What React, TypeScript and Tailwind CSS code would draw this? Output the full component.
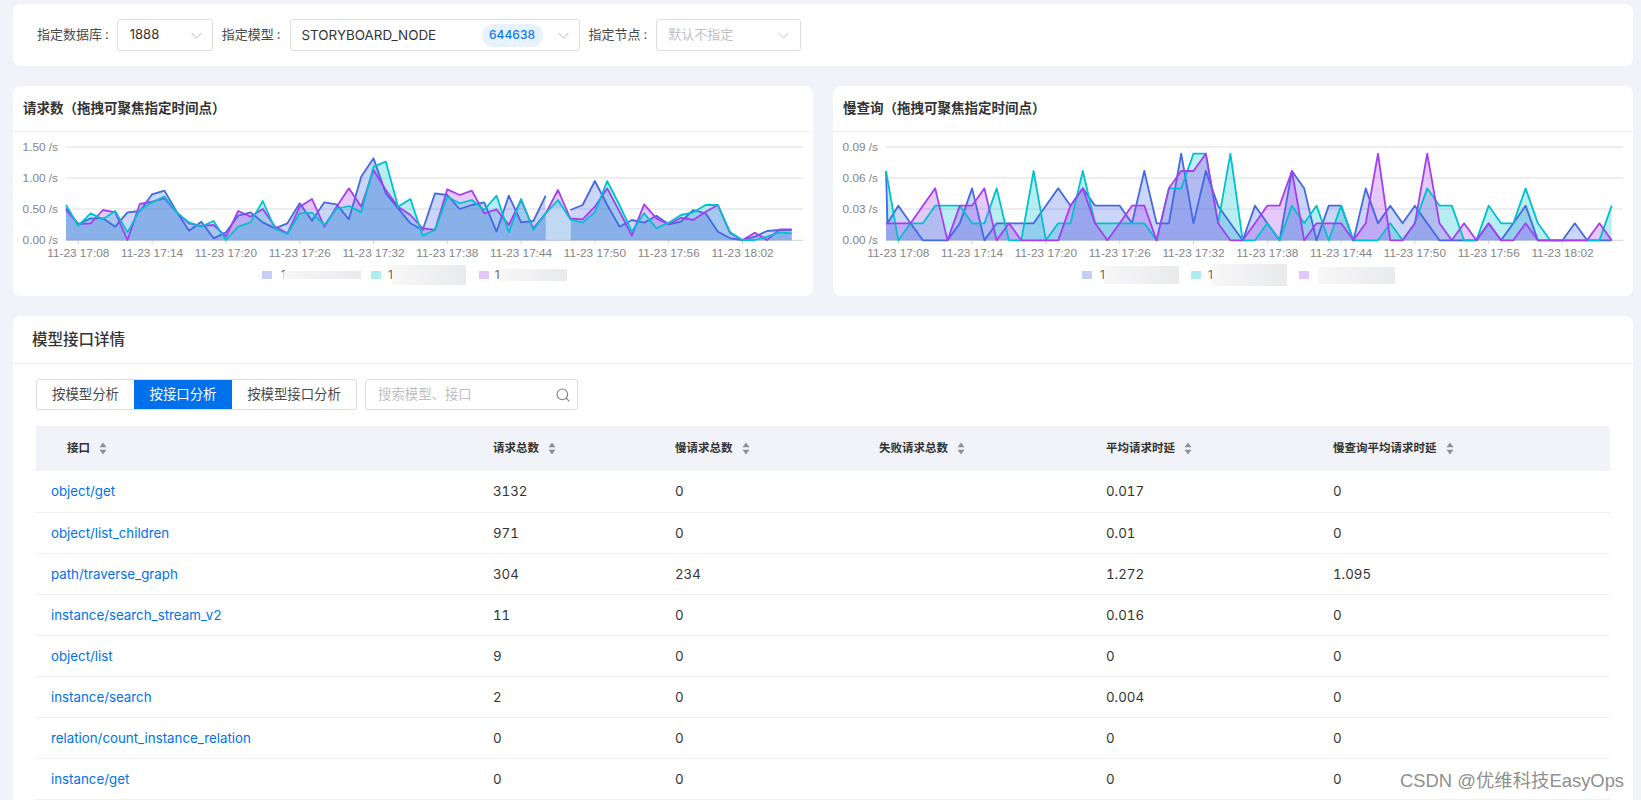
import { Search } from "lucide-react";

const font = { fontFamily: '"Inter", "Noto Sans CJK SC", sans-serif' };

// les valeurs sont lues sur la capture, en px de zoom (y = d / 3 - 7)
const reqBlue = [250, 297, 280, 280, 305, 262, 258, 208, 197, 260, 317, 290, 340, 322, 272, 262, 292, 310, 295, 235, 287, 232, 238, 283, 155, 100, 205, 250, 295, 315, 205, 210, 252, 240, 232, 320, 212, 292, 288, 212, null, 255, 240, 168, 240, 305, 285, 293, 272, 298, 290, 255, 265, 320, 340, 345, 335, 318, 315, 315];
const reqPurple = [255, 297, 295, 255, 262, 345, 237, 230, 220, 262, 295, 303, 300, 335, 258, 275, 252, 305, 325, 245, 222, 305, 245, 190, 245, 135, 195, 245, 270, 310, 315, 193, 210, 197, 265, 253, 300, 225, 310, 265, 195, 280, 283, 245, 190, 260, 332, 238, 280, 298, 278, 285, 260, 240, 325, 345, 323, 345, 313, 313];
const reqTeal = [240, 302, 265, 283, 258, 322, 255, 232, 215, 262, 292, 305, 288, 345, 305, 292, 228, 312, 327, 265, 263, 300, 252, 243, 262, 125, 110, 245, 222, 332, 315, 215, 235, 225, 255, 212, 322, 222, 315, 265, 225, 283, 293, 262, 168, 240, 320, 265, 310, 293, 270, 262, 240, 240, 322, 345, 345, 335, 322, 325];

const slowBlue = [295, 242, 295, 346, 346, 346, 295, 190, 346, 295, 295, 295, 295, 242, 190, 242, 190, 242, 242, 242, 295, 138, 295, 295, 86, 295, 138, 242, 295, 346, 242, 295, 346, 138, 190, 346, 242, 242, 346, 190, 295, 242, 295, 242, 295, 346, 346, 346, 346, 295, 346, 295, 242, 346, 346, 346, 295, 346, 346, 346];
const slowTeal = [138, 346, 295, 295, 242, 242, 242, 295, 295, 190, 346, 346, 138, 346, 295, 295, 138, 295, 295, 295, 295, 295, 346, 190, 190, 86, 86, 295, 86, 346, 346, 295, 346, 242, 295, 242, 346, 242, 346, 346, 346, 295, 346, 295, 190, 242, 242, 346, 346, 242, 295, 295, 190, 295, 346, 346, 346, 346, 346, 242];
const slowPurple = [295, 295, 295, 242, 190, 346, 242, 242, 190, 346, 295, 346, 346, 346, 346, 242, 190, 295, 346, 295, 242, 242, 346, 190, 138, 138, 86, 295, 346, 346, 295, 242, 242, 138, 346, 295, 295, 295, 346, 295, 86, 346, 346, 295, 86, 295, 346, 295, 346, 295, 346, 346, 295, 346, 346, 346, 346, 346, 295, 346];

const BLUE = "#4469e6";
const TEAL = "#00c2cd";
const PURPLE = "#a63df2";

const ticks = ["17:08", "17:14", "17:20", "17:26", "17:32", "17:38", "17:44", "17:50", "17:56", "18:02"];

type Serie = { color: string; values: (number | null)[]; head?: number };

const px = (i: number) => 53 + i * 12.3;
const py = (d: number) => d / 3 - 7;
const BASE = 108.3;

// decoupe la serie quand il manque une valeur
function segments(s: Serie) {
  const out: [number, number][][] = [];
  let cur: [number, number][] = [];
  if (s.head) cur.push([px(0), py(s.head)]);
  s.values.forEach((v, i) => {
    if (v === null) {
      if (cur.length) out.push(cur);
      cur = [];
    } else {
      cur.push([s.head && i === 0 ? px(0) + 1.5 : px(i), py(v)]);
    }
  });
  if (cur.length) out.push(cur);
  return out;
}

function Chart({ labels, series, gap }: { labels: string[]; series: Serie[]; gap?: boolean }) {
  return (
    <svg width={800} height={130} className="block">
      {[15, 46, 77].map((y) => (
        <line key={y} x1={53} x2={790} y1={y} y2={y} stroke="#e9e9ec" strokeWidth={1.3} />
      ))}
      <line x1={53} x2={790} y1={BASE} y2={BASE} stroke="#cfd2d8" />
      {labels.map((l, i) => (
        <text key={l} x={45} y={[15, 46, 77, 108][i] + 4} textAnchor="end" fontSize={11.8} fill="#858585" fontFamily="Liberation Sans, sans-serif">
          {l}
        </text>
      ))}
      {ticks.map((t, i) => (
        <g key={t}>
          <line x1={65.3 + i * 73.8} x2={65.3 + i * 73.8} y1={BASE} y2={BASE + 4} stroke="#cfd2d8" />
          <text x={65.3 + i * 73.8} y={125} textAnchor="middle" fontSize={11.8} fill="#858585" fontFamily="Liberation Sans, sans-serif">
            {`11-23 ${t}`}
          </text>
        </g>
      ))}
      {series.map((s) =>
        segments(s).map((seg, i) => (
          <path
            key={s.color + i}
            d={`M${seg[0][0]} ${BASE} ${seg.map((p) => `L${p[0]} ${p[1]}`).join(" ")} L${seg[seg.length - 1][0]} ${BASE}Z`}
            fill={s.color}
            fillOpacity={0.28}
          />
        )),
      )}
      {gap && <rect x={533} y={76} width={25} height={32} fill="#ffffff" fillOpacity={0.3} />}
      {series.map((s) =>
        segments(s).map((seg, i) => (
          <polyline
            key={s.color + i}
            points={seg.map((p) => p.join(",")).join(" ")}
            fill="none"
            stroke={s.color}
            strokeWidth={1.8}
            strokeLinejoin="round"
          />
        )),
      )}
    </svg>
  );
}

function Swatch({ className }: { className: string }) {
  return <span className={`w-[10px] h-[8px] shrink-0 ${className}`} />;
}

function Blur({ className }: { className: string }) {
  return <span className={`block shrink-0 bg-gradient-to-r from-[#f7f7f8] to-[#e9eaec] ${className}`} />;
}

function ChartCard({ title, children }: { title: string; children: React.ReactNode }) {
  return (
    <div className="bg-white rounded-lg h-[210px] overflow-hidden">
      <div className="h-[46px] border-b border-[#f0f0f2] flex items-center px-[10px] text-[13.5px] font-semibold text-[#333]">
        {title}
      </div>
      {children}
    </div>
  );
}

function Chevron({ light }: { light?: boolean }) {
  return (
    <svg width={11} height={7} viewBox="0 0 11 7" className="shrink-0">
      <path d="M0.5 0.8 L5.5 6 L10.5 0.8" fill="none" stroke={light ? "#c4c4c4" : "#b4b4b4"} strokeWidth={1} />
    </svg>
  );
}

function SortIcon() {
  return (
    <svg width={8} height={13} viewBox="0 0 8 13" className="ml-[9px] shrink-0">
      <path d="M4 0.5 L7.5 5.2 L0.5 5.2Z M4 12.5 L7.5 7.8 L0.5 7.8Z" fill="#8c8f94" />
    </svg>
  );
}

function Label({ children }: { children: string }) {
  return (
    <span className="text-[13px] text-[#4a4a4a] whitespace-nowrap flex items-center">
      {children}
      <span className="ml-[3px]">:</span>
    </span>
  );
}

const rows = [
  ["object/get", "3132", "0", "", "0.017", "0"],
  ["object/list_children", "971", "0", "", "0.01", "0"],
  ["path/traverse_graph", "304", "234", "", "1.272", "1.095"],
  ["instance/search_stream_v2", "11", "0", "", "0.016", "0"],
  ["object/list", "9", "0", "", "0", "0"],
  ["instance/search", "2", "0", "", "0.004", "0"],
  ["relation/count_instance_relation", "0", "0", "", "0", "0"],
  ["instance/get", "0", "0", "", "0", "0"],
];

const heads = ["请求总数", "慢请求总数", "失败请求总数", "平均请求时延", "慢查询平均请求时延"];

export default function App() {
  return (
    <div className="relative h-[800px] overflow-hidden bg-[#f1f3f8] pl-[13px] pr-[8px] pt-[4px] flex flex-col gap-[20px]" style={font}>
      <div className="bg-white rounded-lg h-[62px] shrink-0 flex items-center pl-[24px]">
        <Label>指定数据库</Label>
        <div className="ml-[8px] w-[96px] h-[32px] border border-[#dcdee2] rounded-[3px] flex items-center justify-between pl-[12px] pr-[10px] text-[13px] text-[#333]">
          1888
          <Chevron />
        </div>
        <div className="ml-[9px]">
          <Label>指定模型</Label>
        </div>
        <div className="ml-[9px] w-[290px] h-[32px] border border-[#dcdee2] rounded-[3px] flex items-center pl-[11px] pr-[10px] text-[13.4px] text-[#333]">
          <span>STORYBOARD_NODE</span>
          <span className="ml-auto mr-[15px] h-[23px] w-[61px] rounded-full bg-[#e8f2fe] text-[#0f7bea] text-[12px] font-medium flex items-center justify-center">
            644638
          </span>
          <Chevron />
        </div>
        <div className="ml-[9px]">
          <Label>指定节点</Label>
        </div>
        <div className="ml-[9px] w-[145px] h-[32px] border border-[#dcdee2] rounded-[3px] flex items-center justify-between pl-[11px] pr-[11px] text-[13px] text-[#bfbfbf]">
          默认不指定
          <Chevron light />
        </div>
      </div>

      <div className="grid grid-cols-2 gap-[20px] shrink-0">
        <ChartCard title="请求数（拖拽可聚焦指定时间点）">
          <Chart
            labels={["1.50 /s", "1.00 /s", "0.50 /s", "0.00 /s"]}
            gap
            series={[
              { color: BLUE, values: reqBlue },
              { color: PURPLE, values: reqPurple },
              { color: TEAL, values: reqTeal },
            ]}
          />
          <div className="h-[34px] flex items-start text-[12px] text-[#666] pl-[249px] pt-[2px]">
            <div className="flex items-center h-[22px]">
              <Swatch className="bg-[#c5cff5]" />
              <span className="ml-[9px]">1</span>
              <Blur className="ml-[-2px] w-[77px] h-[8px]" />
              <Swatch className="ml-[10px] bg-[#aeecef]" />
              <span className="ml-[7px]">1</span>
              <Blur className="ml-[-1px] w-[74px] h-[20px]" />
              <Swatch className="ml-[13px] bg-[#e2c7fb]" />
              <span className="ml-[6px]">1</span>
              <Blur className="w-[67px] h-[12px]" />
            </div>
          </div>
        </ChartCard>
        <ChartCard title="慢查询（拖拽可聚焦指定时间点）">
          <Chart
            labels={["0.09 /s", "0.06 /s", "0.03 /s", "0.00 /s"]}
            series={[
              { color: BLUE, values: slowBlue, head: 138 },
              { color: TEAL, values: slowTeal },
              { color: PURPLE, values: slowPurple },
            ]}
          />
          <div className="h-[34px] flex items-start text-[12px] text-[#666] pl-[249px] pt-[2px]">
            <div className="flex items-center h-[22px]">
              <Swatch className="bg-[#c5cff5]" />
              <span className="ml-[8px]">1</span>
              <Blur className="ml-[-1px] w-[75px] h-[18px]" />
              <Swatch className="ml-[12px] bg-[#aeecef]" />
              <span className="ml-[7px]">1</span>
              <Blur className="ml-[-1px] w-[75px] h-[22px]" />
              <Swatch className="ml-[12px] bg-[#e2c7fb]" />
              <Blur className="ml-[9px] w-[77px] h-[17px]" />
            </div>
          </div>
        </ChartCard>
      </div>

      <div className="bg-white rounded-t-lg flex-1">
        <div className="h-[48px] border-b border-[#f0f0f2] flex items-center pl-[19px] text-[15.5px] font-medium text-[#333]">
          模型接口详情
        </div>
        <div className="pl-[23px] pr-[23px] pt-[15px]">
          <div className="flex items-center h-[31px]">
            <div className="flex h-full text-[13.4px] border border-[#d9dce0] rounded-[3px] overflow-hidden">
              <span className="w-[97px] flex items-center justify-center text-[#4a4a4a]">按模型分析</span>
              <span className="w-[98px] flex items-center justify-center bg-[#0071eb] text-white">按接口分析</span>
              <span className="w-[124px] flex items-center justify-center text-[#4a4a4a]">按模型接口分析</span>
            </div>
            <div className="ml-[8px] w-[213px] h-full border border-[#d9dce0] rounded-[3px] flex items-center justify-between pl-[12px] pr-[6px] text-[13.4px] text-[#bfbfbf]">
              搜索模型、接口
              <Search size={16} strokeWidth={1.6} className="text-[#7f7f7f]" />
            </div>
          </div>
          <table className="mt-[16px] w-[1574px] table-fixed border-collapse text-[13.3px] tabular-nums">
            <colgroup>
              <col className="w-[442px]" />
              <col className="w-[182px]" />
              <col className="w-[204px]" />
              <col className="w-[227px]" />
              <col className="w-[227px]" />
              <col />
            </colgroup>
            <thead>
              <tr className="h-[45px] bg-[#f1f3f8] text-[11.5px] font-semibold text-[#333]">
                <th className="pl-[31px] font-semibold text-left">
                  <span className="flex items-center">
                    接口
                    <SortIcon />
                  </span>
                </th>
                {heads.map((h) => (
                  <th key={h} className="pl-[15px] font-semibold text-left">
                    <span className="flex items-center">
                      {h}
                      <SortIcon />
                    </span>
                  </th>
                ))}
              </tr>
            </thead>
            <tbody>
              {rows.map((r) => (
                <tr key={r[0]} className="h-[41px] border-b border-[#f0f0f2] text-[#333]">
                  <td className="pl-[15px] pt-[2px] text-[#0071eb]">{r[0]}</td>
                  {r.slice(1).map((c, i) => (
                    <td key={i} className="pl-[15px] pt-[2px]">
                      {c}
                    </td>
                  ))}
                </tr>
              ))}
            </tbody>
          </table>
        </div>
      </div>

      <span className="absolute left-[1400px] top-[769px] text-[18.4px] leading-[24px] text-[#8f8f8f] whitespace-nowrap" style={{ fontFamily: '"Liberation Sans", "Noto Sans CJK SC", sans-serif' }}>
        CSDN @优维科技EasyOps
      </span>
    </div>
  );
}
